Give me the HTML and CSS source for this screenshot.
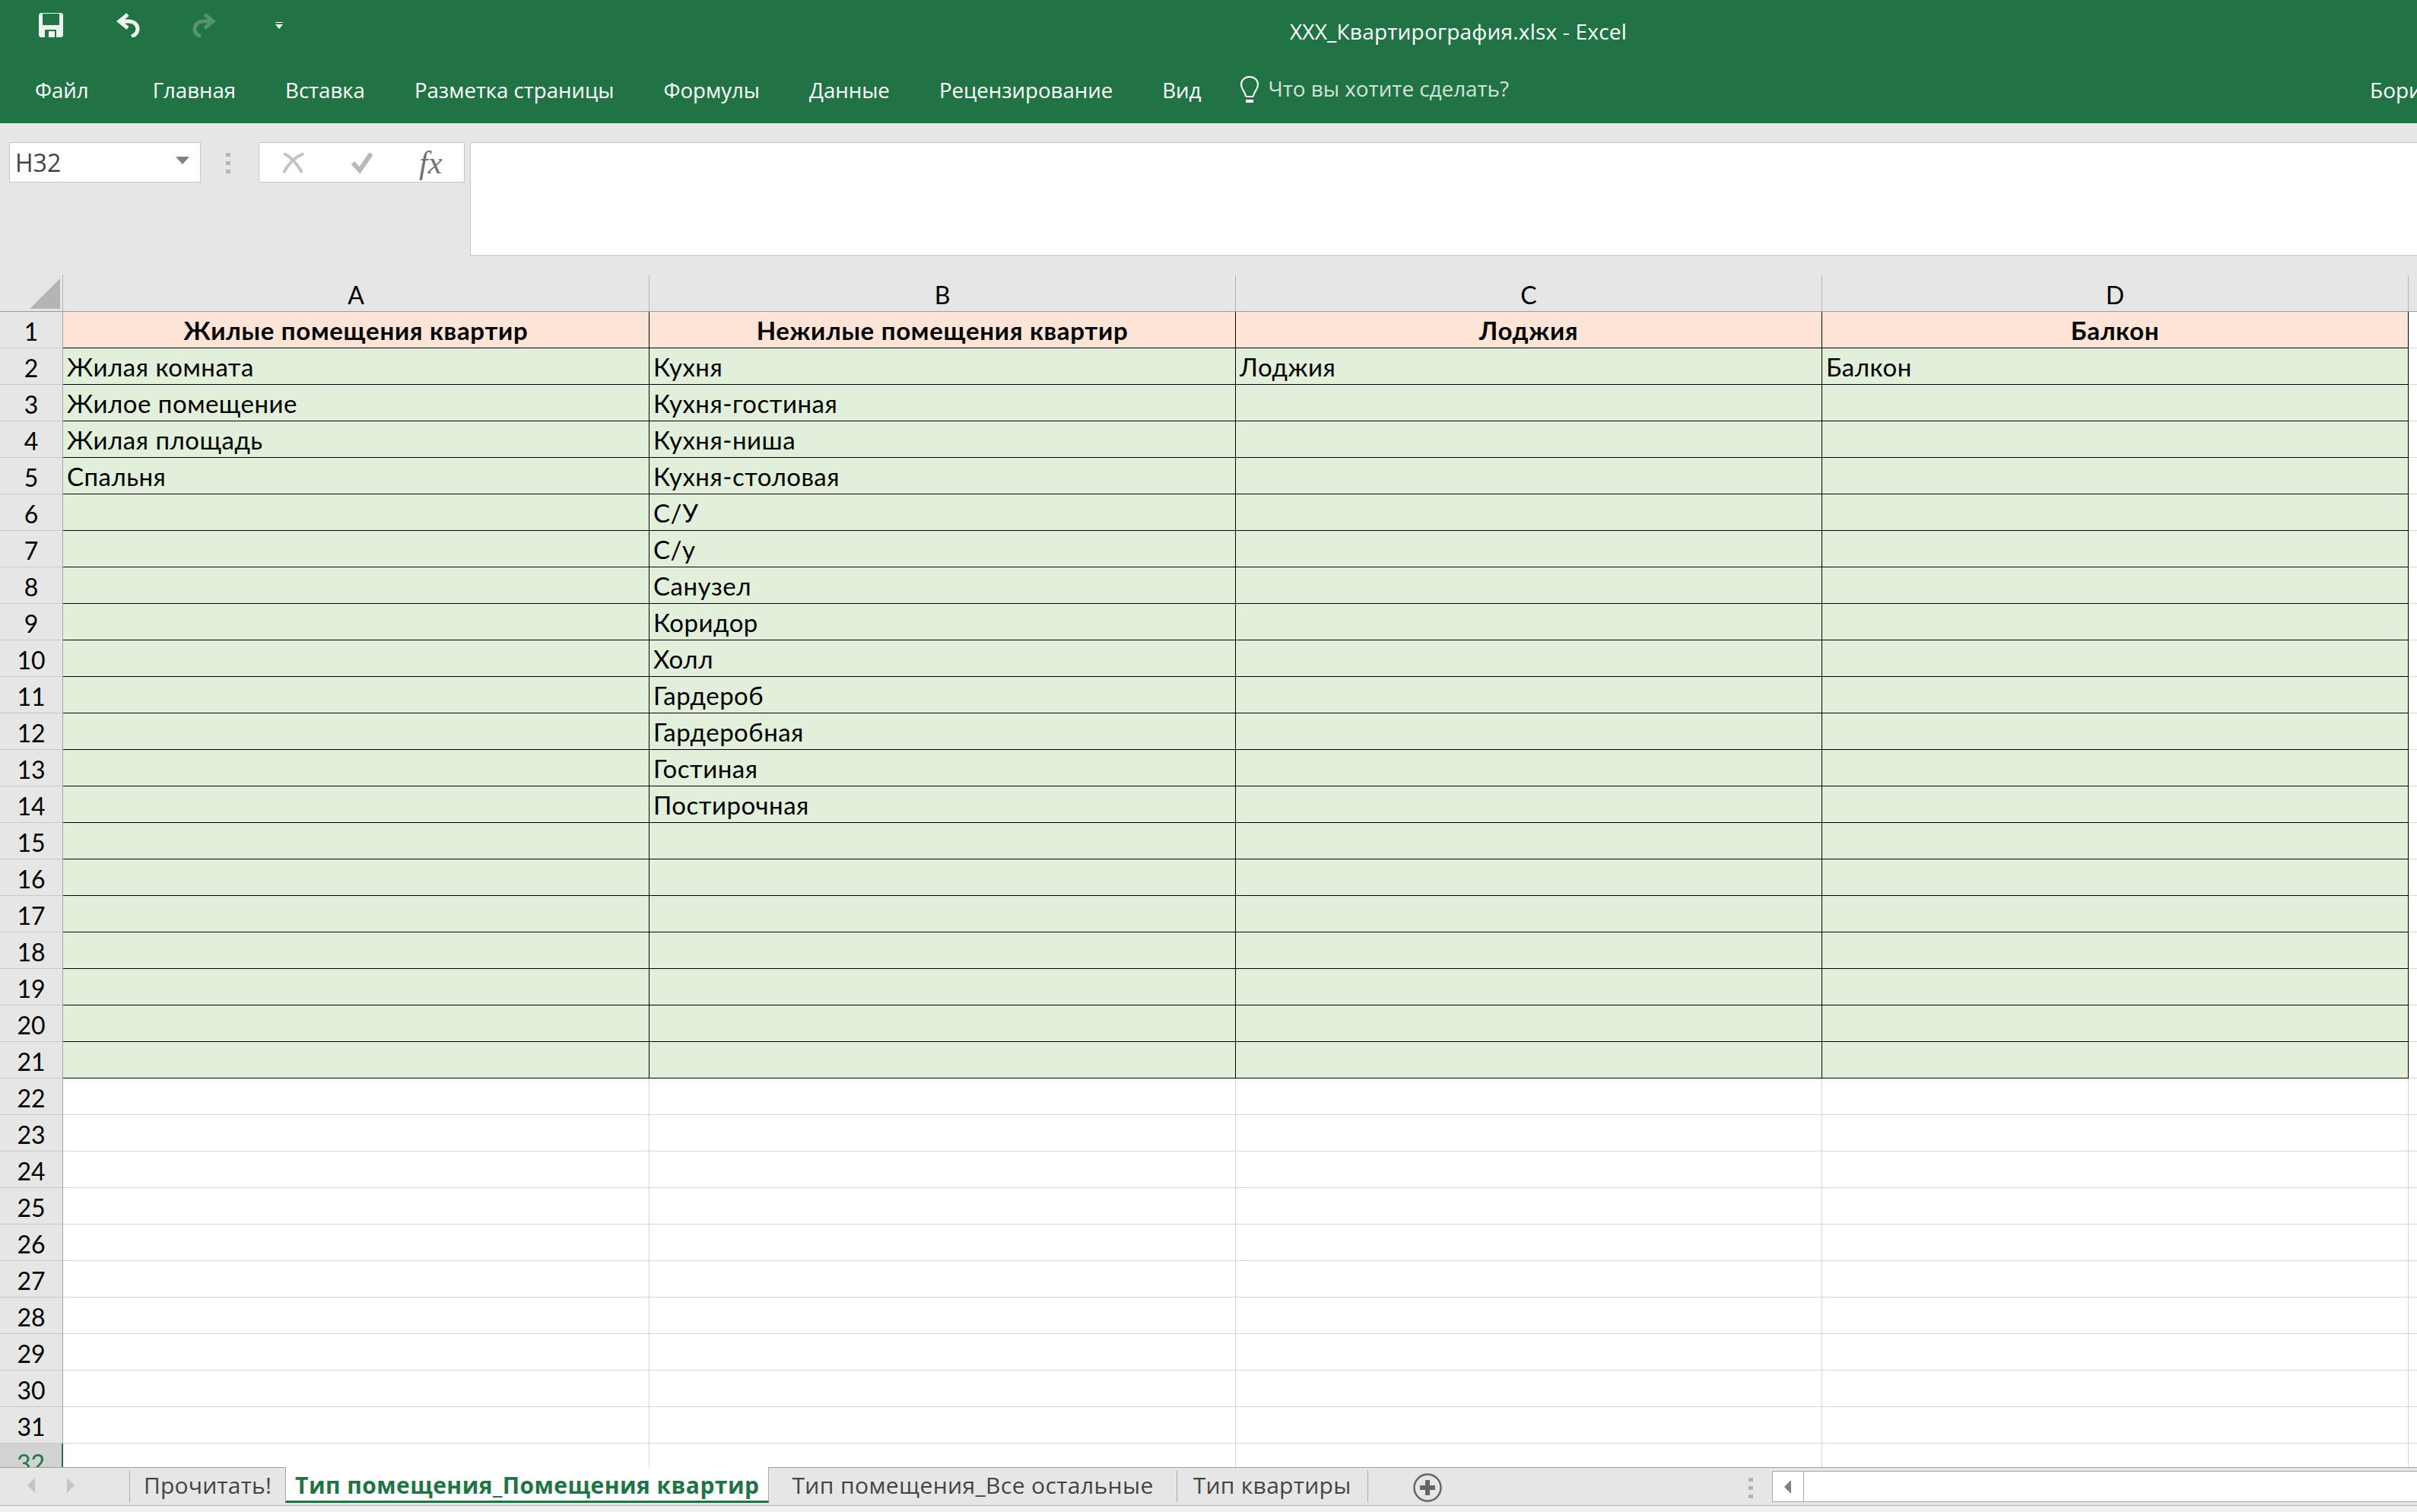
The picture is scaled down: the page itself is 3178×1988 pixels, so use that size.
FILE: index.html
```html
<!DOCTYPE html>
<html lang="ru">
<head>
  <meta charset="UTF-8" />
  <title>XXX_Квартирография.xlsx - Excel</title>
  <link rel="stylesheet" href="styles.css">
</head>
<body>
  <div class="titlebar">
    <div class="qat">
      <svg class="qat-icon" viewBox="0 0 32 32"><path fill="#f1f1f1" fill-rule="evenodd" d="M2 0h28l2 2v28l-2 2H2l-2-2V2zM5 1v15h22V1zM8 22v10h15V22zM13 24h8v8h-8z"/></svg>
      <svg class="qat-icon" viewBox="0 0 32 32"><path fill="none" stroke="#f1f1f1" stroke-width="5" d="M16 2L5 11l11 9M5 11h12c8 0 12 5 12 10 0 4-3 8-8 10"/></svg>
      <svg class="qat-icon dim" viewBox="0 0 32 32"><path fill="none" stroke="#f1f1f1" stroke-width="5" d="M16 2l11 9-11 9M27 11H15C7 11 3 16 3 21c0 4 3 8 8 10"/></svg>
      <svg class="qat-more" viewBox="0 0 10 10"><path fill="#fff" d="M0 0h10v1H0zM0 3h10L5 9z"/></svg>
    </div>
    <div class="doc-title">XXX_Квартирография.xlsx - Excel</div>
  </div>

  <div class="ribbon">
    <span class="rtab rtab-file">Файл</span>
    <span class="rtab">Главная</span>
    <span class="rtab">Вставка</span>
    <span class="rtab">Разметка страницы</span>
    <span class="rtab">Формулы</span>
    <span class="rtab">Данные</span>
    <span class="rtab">Рецензирование</span>
    <span class="rtab">Вид</span>
    <svg class="bulb" viewBox="0 0 26 36"><path fill="none" stroke="#fff" stroke-width="2" d="M8 27h10M8 27c0-6-6-9-6-16C2 5 7 1 13 1s11 4 11 10c0 7-6 10-6 16"/><path fill="#fff" d="M8 31h10v4H8z"/></svg>
    <span class="tell-me">Что вы хотите сделать?</span>
    <span class="user">Борис</span>
  </div>

  <div class="formula-bar">
    <div class="name-box">
      <span>H32</span>
      <svg class="name-arrow" viewBox="0 0 18 10"><path fill="#808080" d="M0 0h18L9 10z"/></svg>
    </div>
    <div class="vdots"><i></i><i></i><i></i></div>
    <div class="fx-box">
      <svg class="fx-icon" viewBox="0 0 30 30"><path fill="none" stroke="#c4c4c4" stroke-width="4" d="M2 3c10 4 18 14 24 25M2 28C8 16 16 8 28 3"/></svg>
      <svg class="fx-icon" viewBox="0 0 30 30"><path fill="none" stroke="#b8b8b8" stroke-width="6" d="M3 15l9 10L27 3"/></svg>
      <span class="fx">fx</span>
    </div>
    <div class="formula-input"></div>
  </div>

  <div class="sheet">
    <table>
      <colgroup><col class="c-row"><col class="c-data"><col class="c-data"><col class="c-data"><col class="c-data"><col></colgroup>
      <thead>
        <tr><th class="corner"><svg class="corner-tri" viewBox="0 0 40 40"><path fill="#b4b4b4" d="M40 0v40H0z"/></svg></th><th>A</th><th>B</th><th>C</th><th>D</th><th></th></tr>
      </thead>
      <tbody>
        <tr class="peach"><th>1</th><td>Жилые помещения квартир</td><td>Нежилые помещения квартир</td><td>Лоджия</td><td>Балкон</td><td></td></tr>
        <tr class="green"><th>2</th><td>Жилая комната</td><td>Кухня</td><td>Лоджия</td><td>Балкон</td><td></td></tr>
        <tr class="green"><th>3</th><td>Жилое помещение</td><td>Кухня-гостиная</td><td></td><td></td><td></td></tr>
        <tr class="green"><th>4</th><td>Жилая площадь</td><td>Кухня-ниша</td><td></td><td></td><td></td></tr>
        <tr class="green"><th>5</th><td>Спальня</td><td>Кухня-столовая</td><td></td><td></td><td></td></tr>
        <tr class="green"><th>6</th><td></td><td>С/У</td><td></td><td></td><td></td></tr>
        <tr class="green"><th>7</th><td></td><td>С/у</td><td></td><td></td><td></td></tr>
        <tr class="green"><th>8</th><td></td><td>Санузел</td><td></td><td></td><td></td></tr>
        <tr class="green"><th>9</th><td></td><td>Коридор</td><td></td><td></td><td></td></tr>
        <tr class="green"><th>10</th><td></td><td>Холл</td><td></td><td></td><td></td></tr>
        <tr class="green"><th>11</th><td></td><td>Гардероб</td><td></td><td></td><td></td></tr>
        <tr class="green"><th>12</th><td></td><td>Гардеробная</td><td></td><td></td><td></td></tr>
        <tr class="green"><th>13</th><td></td><td>Гостиная</td><td></td><td></td><td></td></tr>
        <tr class="green"><th>14</th><td></td><td>Постирочная</td><td></td><td></td><td></td></tr>
        <tr class="green"><th>15</th><td></td><td></td><td></td><td></td><td></td></tr>
        <tr class="green"><th>16</th><td></td><td></td><td></td><td></td><td></td></tr>
        <tr class="green"><th>17</th><td></td><td></td><td></td><td></td><td></td></tr>
        <tr class="green"><th>18</th><td></td><td></td><td></td><td></td><td></td></tr>
        <tr class="green"><th>19</th><td></td><td></td><td></td><td></td><td></td></tr>
        <tr class="green"><th>20</th><td></td><td></td><td></td><td></td><td></td></tr>
        <tr class="green"><th>21</th><td></td><td></td><td></td><td></td><td></td></tr>
        <tr><th>22</th><td></td><td></td><td></td><td></td><td></td></tr>
        <tr><th>23</th><td></td><td></td><td></td><td></td><td></td></tr>
        <tr><th>24</th><td></td><td></td><td></td><td></td><td></td></tr>
        <tr><th>25</th><td></td><td></td><td></td><td></td><td></td></tr>
        <tr><th>26</th><td></td><td></td><td></td><td></td><td></td></tr>
        <tr><th>27</th><td></td><td></td><td></td><td></td><td></td></tr>
        <tr><th>28</th><td></td><td></td><td></td><td></td><td></td></tr>
        <tr><th>29</th><td></td><td></td><td></td><td></td><td></td></tr>
        <tr><th>30</th><td></td><td></td><td></td><td></td><td></td></tr>
        <tr><th>31</th><td></td><td></td><td></td><td></td><td></td></tr>
        <tr><th class="active-row">32</th><td></td><td></td><td></td><td></td><td></td></tr>
      </tbody>
    </table>
  </div>

  <div class="tabbar">
    <div class="sheet-nav">
      <svg class="nav-arrow" viewBox="0 0 10 20"><path fill="#c4c4c4" d="M10 0v20L0 10z"/></svg>
      <svg class="nav-arrow" viewBox="0 0 10 20"><path fill="#c4c4c4" d="M0 0v20l10-10z"/></svg>
    </div>
    <div class="tab tab-first">Прочитать!</div>
    <div class="tab tab-active">Тип помещения_Помещения квартир</div>
    <div class="tab tab-third">Тип помещения_Все остальные</div>
    <div class="tab tab-fourth">Тип квартиры</div>
    <svg class="add-sheet" viewBox="0 0 38 38"><circle cx="19" cy="19" r="17.5" fill="none" stroke="#666" stroke-width="2.5"/><path fill="#666" d="M16 9h6v7h7v6h-7v7h-6v-7H9v-6h7z"/></svg>
    <div class="vdots vdots-tabs"><i></i><i></i><i></i></div>
    <div class="hscroll">
      <div class="hscroll-btn"><svg class="hscroll-arrow" viewBox="0 0 9 18"><path fill="#808080" d="M9 0v18L0 9z"/></svg></div>
    </div>
  </div>
  <div class="statusbar"></div>
</body>
</html>
```

FILE: styles.css
```css
html, body {
  margin: 0;
  padding: 0;
  height: 100%;
}

body {
  display: flex;
  flex-direction: column;
  overflow: hidden;
  background-color: #fff;
  font-family: "Open Sans", sans-serif;
}

.titlebar {
  display: flex;
  align-items: flex-start;
  height: 84px;
  background-color: #217346;
  color: #fff;
}

.qat {
  display: flex;
  align-items: flex-start;
  gap: 69px;
  padding: 17px 0 0 51px;
}

.qat-icon {
  display: block;
  width: 32px;
  height: 32px;
}

.qat-icon.dim {
  opacity: 0.25;
}

.qat-more {
  width: 10px;
  height: 10px;
  margin: 12px 0 0 8px;
}

.doc-title {
  margin: 22px 0 0 1324px;
  font-size: 28px;
  line-height: 38px;
  letter-spacing: 0.2px;
  white-space: nowrap;
}

.ribbon {
  display: flex;
  align-items: center;
  height: 78px;
  padding: 0 0 10px 46px;
  box-sizing: border-box;
  background-color: #217346;
  color: #fff;
  white-space: nowrap;
}

.rtab {
  margin-right: 65px;
  font-size: 27.6px;
}

.rtab-file {
  margin-right: 84px;
}

.bulb {
  width: 26px;
  height: 36px;
  margin-left: -14px;
  flex-shrink: 0;
}

.tell-me {
  margin: -4px 0 0 11px;
  font-size: 27.8px;
  color: #d3e3da;
}

.user {
  margin-left: auto;
  width: 62px;
  overflow: hidden;
  font-size: 28px;
}

.formula-bar {
  display: flex;
  align-items: flex-start;
  height: 200px;
  padding: 25px 0 0 12px;
  box-sizing: border-box;
  background-color: #e6e6e6;
}

.name-box {
  display: flex;
  align-items: center;
  justify-content: space-between;
  width: 252px;
  height: 53px;
  padding: 0 14px 0 7px;
  box-sizing: border-box;
  background-color: #fff;
  border: 1px solid #c6c6c6;
  font-size: 32px;
  color: #444;
}

.name-arrow {
  width: 18px;
  height: 10px;
  margin-bottom: 6px;
}

.vdots {
  display: flex;
  flex-direction: column;
  gap: 6px;
  margin: 14px 37px 0 33px;
}

.vdots i {
  display: block;
  width: 6px;
  height: 5px;
  background-color: #b4b4b4;
}

.fx-box {
  display: flex;
  align-items: center;
  gap: 60px;
  width: 271px;
  height: 53px;
  padding-left: 30px;
  box-sizing: border-box;
  background-color: #fff;
  border: 1px solid #c6c6c6;
}

.fx-icon {
  width: 30px;
  height: 30px;
}

.fx {
  font-family: "Liberation Serif", serif;
  font-style: italic;
  font-size: 42px;
  line-height: 44px;
  color: #707070;
}

.formula-input {
  flex: 1;
  height: 149px;
  margin-left: 7px;
  box-sizing: border-box;
  background-color: #fff;
  border: 1px solid #c6c6c6;
  border-right: none;
}

.sheet {
  flex: 1;
  min-height: 0;
  overflow: hidden;
  background-color: #fff;
}

table {
  width: 3178px;
  table-layout: fixed;
  border-collapse: separate;
  border-spacing: 0;
  font-family: Lato, sans-serif;
  font-size: 33px;
  letter-spacing: 0.5px;
  color: #000;
}

.c-row {
  width: 83px;
}

.c-data {
  width: 771px;
}

th, td {
  height: 48px;
  padding: 1px 0 0;
  box-sizing: border-box;
  white-space: nowrap;
  overflow: hidden;
  line-height: 46px;
}

th {
  padding-top: 4px;
  font-size: 32px;
  line-height: 43px;
  letter-spacing: 0;
  font-weight: normal;
  text-align: center;
  background-color: #e6e6e6;
  border-right: 1px solid #a6a6a6;
  border-bottom: 1px solid #c8c8c8;
}

thead th {
  border-right-color: #b4b4b4;
  border-bottom-color: #9c9c9c;
}

thead th:last-child {
  border-right: none;
}

.corner {
  padding: 0 3px 3px 0;
  text-align: right;
  vertical-align: bottom;
}

.corner-tri {
  display: block;
  width: 40px;
  height: 40px;
  margin-left: auto;
}

td {
  padding-left: 5px;
  border-right: 1px solid #d4d4d4;
  border-bottom: 1px solid #d4d4d4;
}

.peach td, .green td {
  border-right-color: #000;
  border-bottom-color: #000;
}

.peach td {
  padding-left: 0;
  font-weight: bold;
  letter-spacing: 0.7px;
  text-align: center;
  background-color: #fde4d6;
}

.green td {
  background-color: #e2efda;
}

.peach td:last-child, .green td:last-child {
  padding-left: 0;
  background-color: #fff;
  border-right: none;
  border-bottom-color: #d4d4d4;
}

td:last-child {
  border-right: none;
}

th.active-row {
  color: #217346;
  background-color: #d2d2d2;
  border-right: 2px solid #217346;
}

.tabbar {
  display: flex;
  align-items: flex-start;
  flex-shrink: 0;
  height: 51px;
  box-sizing: border-box;
  background-color: #e6e6e6;
  border-top: 1px solid #a0a0a0;
  border-bottom: 1px solid #b0b0b0;
  white-space: nowrap;
}

.sheet-nav {
  display: flex;
  align-items: center;
  gap: 42px;
  width: 134px;
  height: 46px;
  padding-left: 36px;
}

.nav-arrow {
  width: 10px;
  height: 20px;
}

.tab {
  height: 42px;
  margin-top: 3px;
  padding: 0 21px;
  box-sizing: border-box;
  border-right: 1px solid #aaa;
  font-size: 30px;
  line-height: 40px;
  letter-spacing: 0.2px;
  color: #444;
}

.tab-first {
  padding: 0 18px;
  border-left: 1px solid #aaa;
  border-right: none;
}

.tab-active {
  height: 47px;
  margin-top: -1px;
  padding: 4px 12px 0;
  background-color: #fff;
  border-left: 1px solid #aaa;
  border-right: 1px solid #aaa;
  border-bottom: 3px solid #217346;
  font-weight: bold;
  letter-spacing: 0.45px;
  color: #217346;
}

.tab-third {
  padding: 0 30px;
  letter-spacing: 0.4px;
}

.tab-fourth {
  letter-spacing: 0.3px;
}

.add-sheet {
  width: 38px;
  height: 38px;
  margin: 7px 0 0 59px;
}

.vdots-tabs {
  margin: 13px 25px 0 403px;
}

.hscroll {
  flex: 1;
  height: 41px;
  margin-top: 4px;
  box-sizing: border-box;
  background-color: #fff;
  border: 1px solid #a8a8a8;
  border-right: none;
}

.hscroll-btn {
  display: flex;
  align-items: center;
  justify-content: center;
  width: 41px;
  height: 100%;
  box-sizing: border-box;
  border-right: 1px solid #a8a8a8;
}

.hscroll-arrow {
  width: 9px;
  height: 18px;
}

.statusbar {
  flex-shrink: 0;
  height: 8px;
  background-color: #f0f0f0;
}
```
